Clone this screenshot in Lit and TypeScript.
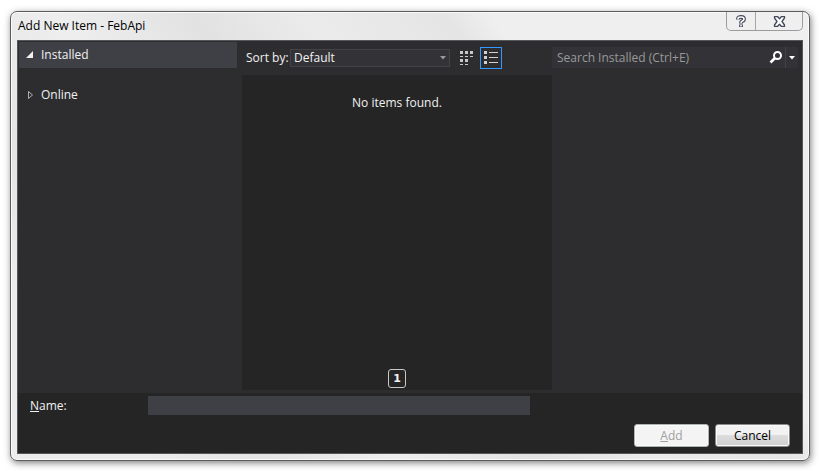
import { LitElement, html, css, svg } from "lit";
import { customElement, state } from "lit/decorators.js";

const dots = (cells: number[][], w: number, h: number) =>
  cells.map(([x, y]) => svg`<rect x=${x} y=${y} width=${w} height=${h}></rect>`);

@customElement("app-root")
export class AppRoot extends LitElement {
  @state() private view: "icons" | "list" = "list";

  static styles = css`
    :host {
      display: flex;
      box-sizing: border-box;
      min-height: 100vh;
      padding: 11px 9px 10px 10px;
      background: #fff;
      color: #f1f1f1;
      font: 12px/16px "Open Sans", "Noto Sans", sans-serif;
    }
    * {
      box-sizing: border-box;
    }
    button,
    input,
    select {
      margin: 0;
      padding: 0;
      border: 0;
      border-radius: 0;
      font: inherit;
      color: inherit;
      background: none;
    }
    svg {
      display: block;
    }
    .dialog {
      flex: 1;
      display: flex;
      flex-direction: column;
      min-width: 0;
      padding: 0 6px 6px;
      border: 1px solid #5a5c5e;
      border-radius: 7px;
      background: linear-gradient(52deg, #ececec 0 12%, #e4e4e4 22%, #eee 34%, #e2e2e2 46%, #ebebeb 56%, #e5e5e5 68%, #efefef 72%);
      box-shadow: inset 0 0 0 1px #fafafa, 1px 2px 7px rgba(0, 0, 0, 0.5);
    }
    .titlebar {
      display: flex;
      justify-content: space-between;
      align-items: flex-start;
      height: 28px;
    }
    .title {
      margin: 0;
      padding: 6px 0 0 1px;
      font: inherit;
      color: #000;
    }
    .caption {
      display: flex;
      height: 19px;
      border: 1px solid #9a9c9e;
      border-top: 0;
      border-radius: 0 0 5px 5px;
      background: #efefef;
    }
    .caption button {
      display: grid;
      place-items: center;
      width: 28px;
    }
    .caption .close {
      width: 47px;
      border-left: 1px solid #a4a6a8;
    }
    .body {
      flex: 1;
      display: flex;
      flex-direction: column;
      border: 1px solid #55585a;
      background: #2d2d30;
    }
    .main {
      flex: 1;
      display: grid;
      grid-template-columns: 224px minmax(0, 310fr) minmax(0, 250fr);
    }
    .tree {
      display: flex;
      flex-direction: column;
      gap: 14px;
      padding: 1px 5px 0 1px;
    }
    .node {
      display: flex;
      align-items: center;
      gap: 6px;
      height: 26px;
      padding-left: 6px;
      text-align: left;
    }
    .node.selected {
      background: #3f3f46;
    }
    .center {
      display: flex;
      flex-direction: column;
      padding-bottom: 3px;
    }
    .toolbar {
      display: flex;
      align-items: center;
      height: 34px;
      padding-left: 4px;
    }
    .toolbar label {
      width: 44px;
      white-space: nowrap;
    }
    .combo {
      position: relative;
      flex: 0 1 160px;
      min-width: 0;
    }
    .combo select {
      appearance: none;
      display: block;
      width: 100%;
      height: 18px;
      padding: 0 16px 0 3px;
      border: 1px solid #434346;
      background: #333337;
      line-height: 16px;
    }
    .combo svg {
      position: absolute;
      right: 4px;
      top: 7px;
      pointer-events: none;
    }
    .view {
      display: grid;
      place-items: center;
      width: 22px;
      height: 22px;
      margin-left: 6px;
      border: 1px solid transparent;
    }
    .view + .view {
      margin-left: 2px;
    }
    .view.on {
      border-color: #3399ff;
    }
    .items {
      flex: 1;
      display: flex;
      flex-direction: column;
      justify-content: space-between;
      align-items: center;
      padding: 20px 0 2px;
      background: #252526;
    }
    .items p {
      margin: 0;
    }
    .page {
      width: 18px;
      height: 19px;
      border: 1px solid #c8c8c8;
      border-radius: 3px;
      font: bold 11px/16px "DejaVu Sans", sans-serif;
    }
    .search {
      display: flex;
      align-items: center;
      height: 21px;
      margin: 6px 4px 0 0;
      background: #333337;
    }
    .search input {
      flex: 1;
      min-width: 0;
      height: 21px;
      padding-left: 5px;
      outline: 0;
    }
    .search input::placeholder {
      color: #999;
      opacity: 1;
    }
    .search button {
      display: grid;
      place-items: center;
      width: 18px;
      height: 21px;
    }
    .search .more {
      width: 13px;
      border-left: 1px solid #434346;
    }
    .footer {
      padding: 3px 12px 6px;
      background: #252526;
    }
    .name {
      display: flex;
      align-items: center;
      gap: 8px;
    }
    .name label {
      width: 110px;
    }
    .name input {
      flex: 0 1 382px;
      min-width: 0;
      height: 19px;
      padding: 0 4px;
      background: #3f3f46;
      outline: 0;
    }
    .actions {
      display: flex;
      justify-content: flex-end;
      gap: 6px;
      padding-top: 9px;
    }
    .actions button {
      width: 75px;
      height: 23px;
      border: 1px solid #8b8b8b;
      border-radius: 3px;
      color: #000;
      background: linear-gradient(#f2f2f2 0 45%, #dddddd 50%, #cfcfcf);
      box-shadow: inset 0 0 0 1px #fafafa;
    }
    .actions button:disabled {
      border-color: #adb2b5;
      background: #f4f4f4;
      color: #a0a0a0;
    }
  `;

  render() {
    return html`
      <section class="dialog" role="dialog" aria-labelledby="title">
        <header class="titlebar">
          <h1 class="title" id="title">Add New Item - FebApi</h1>
          <div class="caption">
            <button aria-label="Help">
              <svg width="10" height="13" viewBox="0 0 10 13" fill="none">
                <path d="M2 4.500V3.500Q2 2 5 2T8 4Q8 5.500 6.500 6T5 8.500M5 9.500v2.500" stroke="#43485c" stroke-width="3.800" />
                <path d="M2 4.200V3.500Q2 2 5 2T8 4Q8 5.500 6.500 6T5 8M5 10v1.500" stroke="#fff" stroke-width="1.600" />
              </svg>
            </button>
            <button class="close" aria-label="Close">
              <svg width="13" height="11" viewBox="0 0 13 11">
                <path
                  d="M1.500.5h3l2 2.200 2-2.200h3v1.500L9 5.500l2.500 3.500v1.500h-3l-2-2.300-2 2.300h-3V9L4 5.500 1.500 2z"
                  fill="#fff" stroke="#43485c" stroke-width="1.300" stroke-linejoin="round" />
              </svg>
            </button>
          </div>
        </header>
        <div class="body">
          <div class="main">
            <nav class="tree" aria-label="Categories">
              <button class="node selected" aria-expanded="true">
                <svg width="10" height="8" viewBox="0 0 10 8"><path d="M8 0v7H1z" fill="#f1f1f1" /></svg>
                Installed
              </button>
              <button class="node" aria-expanded="false">
                <svg width="10" height="8" viewBox="0 0 10 8">
                  <path d="M3.500.5v7L7.500 4z" fill="none" stroke="#b0b0b0" />
                </svg>
                Online
              </button>
            </nav>
            <div class="center">
              <div class="toolbar">
                <label for="sort">Sort by:</label>
                <div class="combo">
                  <select id="sort"><option>Default</option></select>
                  <svg width="6" height="4" viewBox="0 0 6 4"><path d="M0 0h6L3 3.500z" fill="#999" /></svg>
                </div>
                <button class="view ${this.view === "icons" ? "on" : ""}" aria-label="Medium icons"
                  @click=${() => (this.view = "icons")}>
                  <svg width="14" height="14" viewBox="0 0 14 14" fill="#c8c8c8" shape-rendering="crispEdges">
                    ${dots([[0, 0], [5, 0], [10, 0], [0, 8], [5, 8]], 3, 3)}
                    ${dots([[0, 5], [5, 5], [10, 5], [0, 13], [5, 13]], 3, 1)}
                  </svg>
                </button>
                <button class="view ${this.view === "list" ? "on" : ""}" aria-label="Small icons"
                  @click=${() => (this.view = "list")}>
                  <svg width="14" height="14" viewBox="0 0 14 14" fill="#d0d0d0" shape-rendering="crispEdges">
                    ${dots([[0, 0], [0, 5], [0, 10]], 3, 3)}
                    ${dots([[5, 1], [5, 6], [5, 11]], 9, 1)}
                  </svg>
                </button>
              </div>
              <div class="items">
                <p>No items found.</p>
                <button class="page">1</button>
              </div>
            </div>
            <div>
              <div class="search">
                <input type="text" aria-label="Search Installed" placeholder="Search Installed (Ctrl+E)" />
                <button aria-label="Search">
                  <svg width="14" height="13" viewBox="0 0 14 13" fill="none" stroke="#fff">
                    <circle cx="8.500" cy="4.500" r="3.500" stroke-width="2" />
                    <path d="M6 7L1.500 11.500" stroke-width="2.600" />
                  </svg>
                </button>
                <button class="more" aria-label="Search options">
                  <svg width="6" height="4" viewBox="0 0 6 4"><path d="M0 0h6L3 3.500z" fill="#fff" /></svg>
                </button>
              </div>
            </div>
          </div>
          <footer class="footer">
            <div class="name">
              <label for="name"><u>N</u>ame:</label>
              <input id="name" type="text" />
            </div>
            <div class="actions">
              <button disabled><u>A</u>dd</button>
              <button>Cancel</button>
            </div>
          </footer>
        </div>
      </section>
    `;
  }
}
